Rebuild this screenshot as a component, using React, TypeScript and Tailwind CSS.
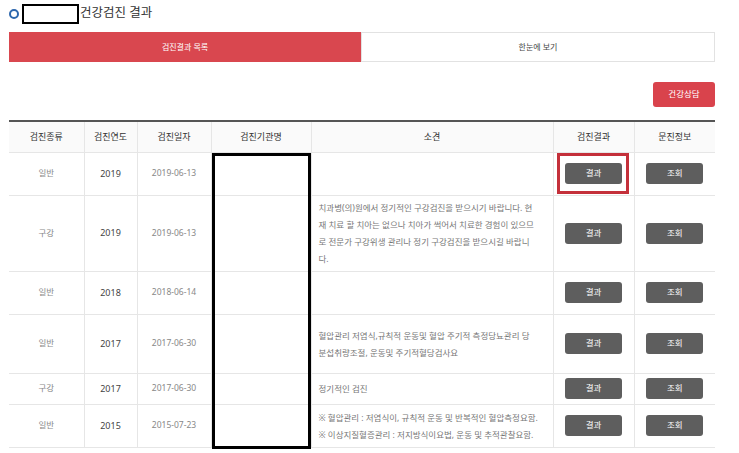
const FONT = { fontFamily: '"Noto Sans", "Noto Sans CJK KR", sans-serif' }

type Row = {
  kind: string
  year: string
  date: string
  note: string[]
  h: string
}

const ROWS: Row[] = [
  { kind: '일반', year: '2019', date: '2019-06-13', note: [], h: 'h-[43px]' },
  {
    kind: '구강',
    year: '2019',
    date: '2019-06-13',
    note: [
      '치과병(의)원에서 정기적인 구강검진을 받으시기 바랍니다. 현',
      '재 치료 할 치아는 없으나 치아가 썩어서 치료한 경험이 있으므',
      '로 전문가 구강위생 관리나 정기 구강검진을 받으시길 바랍니',
      '다.',
    ],
    h: 'h-[76px]',
  },
  { kind: '일반', year: '2018', date: '2018-06-14', note: [], h: 'h-[43px]' },
  {
    kind: '일반',
    year: '2017',
    date: '2017-06-30',
    note: ['혈압관리 저염식,규칙적 운동및 혈압 주기적 측정당뇨관리 당', '분섭취량조절, 운동및 주기적혈당검사요'],
    h: 'h-[59px]',
  },
  { kind: '구강', year: '2017', date: '2017-06-30', note: ['정기적인 검진'], h: 'h-[31px]' },
  {
    kind: '일반',
    year: '2015',
    date: '2015-07-23',
    note: ['※ 혈압관리 : 저염식이, 규칙적 운동 및 반복적인 혈압측정요함.', '※ 이상지질혈증관리 : 저지방식이요법, 운동 및 추적관찰요함.'],
    h: 'h-[43px]',
  },
]

const HEAD = ['검진종류', '검진연도', '검진일자', '검진기관명', '소견', '검진결과', '문진정보']

function GrayButton({ label }: { label: string }) {
  return (
    <span className="inline-flex h-[21px] w-[57px] items-center justify-center rounded-[3px] bg-[#5e5e5e] text-[8.5px] text-white">
      {label}
    </span>
  )
}

export default function App() {
  return (
    <div className="relative h-[453px] w-[739px] overflow-hidden bg-white text-[#555]" style={FONT}>
      {/* 제목 */}
      <div className="flex h-[26px] items-center pl-[9px] pt-[1px]">
        <span className="h-[10px] w-[10px] rounded-full border-[2.5px] border-[#2d67ad] bg-white" />
        <span className="ml-[3px] h-[20px] w-[57px] border-2 border-black" />
        <span className="ml-[1px] text-[12.5px] text-[#333]">건강검진 결과</span>
      </div>

      {/* 탭 */}
      <div className="mx-[9px] mt-[6px] flex h-[30px] w-[706px]">
        <div className="flex flex-1 items-center justify-center bg-[#d9474f] text-[8px] text-white">검진결과 목록</div>
        <div className="flex flex-1 items-center justify-center border border-[#e2e2e2] text-[8px] text-[#444]">
          한눈에 보기
        </div>
      </div>

      <div className="mt-[20px] flex w-[715px] justify-end">
        <span className="flex h-[25px] w-[62px] items-center justify-center rounded-[3px] bg-[#d9434c] text-[8.5px] text-white">
          건강상담
        </span>
      </div>

      {/* 목록 */}
      <table className="ml-[9px] mt-[13px] w-[706px] table-fixed border-collapse border-t-2 border-[#555] text-[8.5px]">
        <colgroup>
          <col className="w-[75px]" />
          <col className="w-[53px]" />
          <col className="w-[74px]" />
          <col className="w-[100px]" />
          <col className="w-[242px]" />
          <col className="w-[81px]" />
          <col className="w-[81px]" />
        </colgroup>
        <thead>
          <tr className="h-[31px] bg-[#fafafa]">
            {HEAD.map((h, i) => (
              <th
                key={h}
                className={`border-b border-[#e6e6e6] text-[9px] font-normal text-[#333] ${i > 0 ? 'border-l' : ''}`}
              >
                {h}
              </th>
            ))}
          </tr>
        </thead>
        <tbody>
          {ROWS.map((r, idx) => (
            <tr key={idx} className={r.h}>
              <td className="border-b border-[#e6e6e6] text-center text-[#888]">{r.kind}</td>
              <td className="border-b border-l border-[#e6e6e6] text-center text-[9px] text-[#444]">{r.year}</td>
              <td className="border-b border-l border-[#e6e6e6] text-center text-[#888]">{r.date}</td>
              <td className="border-b border-l border-[#e6e6e6]" />
              <td className="border-b border-l border-[#e6e6e6] px-[7px] leading-[17px] text-[#777]">
                {r.note.map((line) => (
                  <div key={line} className="whitespace-nowrap">
                    {line}
                  </div>
                ))}
              </td>
              <td className="border-b border-l border-[#e6e6e6] text-center">
                <GrayButton label="결과" />
              </td>
              <td className="border-b border-l border-[#e6e6e6] text-center">
                <GrayButton label="조회" />
              </td>
            </tr>
          ))}
        </tbody>
      </table>

      {/* 가림 상자 */}
      <div className="absolute left-[212px] top-[153px] h-[296px] w-[99px] border-[3px] border-black" />
      {/* 강조 표시 */}
      <div className="absolute left-[557px] top-[153px] h-[41px] w-[72px] border-[3px] border-[#c4303a]" />
    </div>
  )
}
